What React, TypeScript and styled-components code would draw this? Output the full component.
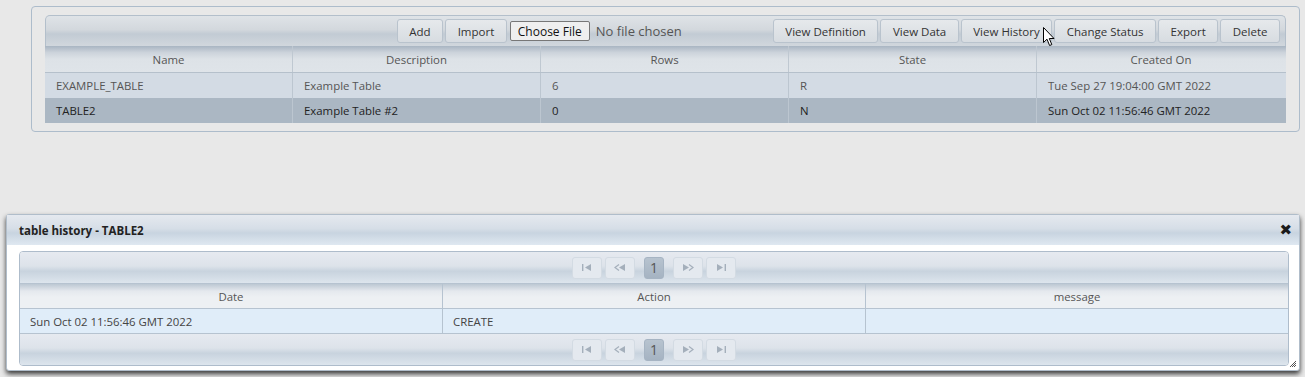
import { FC } from "react";
import styled, { createGlobalStyle } from "styled-components";

const GlobalStyle = createGlobalStyle`
    body {
        margin: 0;
        background: #e8e8e8;
        font-family: "Open Sans", "Noto Sans", sans-serif;
        font-size: 11.4px;
        color: #444;
    }
`;

const tables = [
    { name: "EXAMPLE_TABLE", desc: "Example Table", rows: "6", state: "R", created: "Tue Sep 27 19:04:00 GMT 2022" },
    { name: "TABLE2", desc: "Example Table #2", rows: "0", state: "N", created: "Sun Oct 02 11:56:46 GMT 2022" },
];

const Icon: FC<{ kind: string }> = ({ kind }) => {
    const c = "#a4afbb";
    if (kind === "first")
        return (
            <svg width="10" height="7" viewBox="0 0 10 7">
                <rect x="0" y="0" width="1.4" height="7" fill={c} />
                <polygon points="9,0 9,7 3,3.5" fill={c} />
            </svg>
        );
    if (kind === "prev")
        return (
            <svg width="12" height="7" viewBox="0 0 12 7">
                <polyline points="5,0.5 1,3.5 5,6.5" fill="none" stroke={c} strokeWidth="1.2" />
                <polygon points="11,0 11,7 5,3.5" fill={c} />
            </svg>
        );
    if (kind === "next")
        return (
            <svg width="12" height="7" viewBox="0 0 12 7">
                <polygon points="1,0 1,7 7,3.5" fill={c} />
                <polyline points="7,0.5 11,3.5 7,6.5" fill="none" stroke={c} strokeWidth="1.2" />
            </svg>
        );
    return (
        <svg width="10" height="7" viewBox="0 0 10 7">
            <polygon points="1,0 1,7 7,3.5" fill={c} />
            <rect x="8.6" y="0" width="1.4" height="7" fill={c} />
        </svg>
    );
};

const Pager: FC = () => (
    <PagerBar>
        <PagerBtn>
            <Icon kind="first" />
        </PagerBtn>
        <PagerBtn>
            <Icon kind="prev" />
        </PagerBtn>
        <PageNum>1</PageNum>
        <PagerBtn>
            <Icon kind="next" />
        </PagerBtn>
        <PagerBtn>
            <Icon kind="last" />
        </PagerBtn>
    </PagerBar>
);

export default function App() {
    return (
        <Page>
            <GlobalStyle />
            <Panel>
                <Grid>
                    <Toolbar>
                        <Group>
                            <Button>Add</Button>
                            <Button>Import</Button>
                            <FileButton>Choose File</FileButton>
                            <FileText>No file chosen</FileText>
                        </Group>
                        <Group>
                            <Button>View Definition</Button>
                            <Button>View Data</Button>
                            <Button>View History</Button>
                            <Button>Change Status</Button>
                            <Button>Export</Button>
                            <Button>Delete</Button>
                        </Group>
                    </Toolbar>
                    <HeadRow>
                        <HeadCell>Name</HeadCell>
                        <HeadCell>Description</HeadCell>
                        <HeadCell>Rows</HeadCell>
                        <HeadCell>State</HeadCell>
                        <HeadCell>Created On</HeadCell>
                    </HeadRow>
                    {tables.map((t, i) => (
                        <Row key={t.name} $selected={i === 1}>
                            <Cell>{t.name}</Cell>
                            <Cell>{t.desc}</Cell>
                            <Cell>{t.rows}</Cell>
                            <Cell>{t.state}</Cell>
                            <Cell>{t.created}</Cell>
                        </Row>
                    ))}
                </Grid>
            </Panel>

            <Dialog>
                <TitleBar>
                    <span>table history - TABLE2</span>
                    <Close>✖</Close>
                </TitleBar>
                <DialogBody>
                    <HistGrid>
                        <Pager />
                        <HistHead>
                            <HistHeadCell>Date</HistHeadCell>
                            <HistHeadCell>Action</HistHeadCell>
                            <HistHeadCell>message</HistHeadCell>
                        </HistHead>
                        <HistRow>
                            <HistCell>Sun Oct 02 11:56:46 GMT 2022</HistCell>
                            <HistCell>CREATE</HistCell>
                            <HistCell></HistCell>
                        </HistRow>
                        <Pager />
                    </HistGrid>
                </DialogBody>
                <Grip>
                    <svg width="8" height="8" viewBox="0 0 8 8">
                        <path d="M7 1 L1 7 M7 3 L3 7 M7 5 L5 7" stroke="#555" strokeWidth="1" />
                    </svg>
                </Grip>
            </Dialog>

            <Cursor>
                <svg width="13" height="20" viewBox="0 0 13 20">
                    <path
                        d="M0.5 0.5 L0.5 15.5 L4 12.2 L6.6 18.5 L8.8 17.6 L6.3 11.5 L11 11.5 Z"
                        fill="#fff"
                        stroke="#000"
                        strokeWidth="1"
                        strokeLinejoin="round"
                    />
                </svg>
            </Cursor>
        </Page>
    );
}

const Page = styled.div`
    position: relative;
    width: 1305px;
    height: 377px;
    padding-top: 6px;
    box-sizing: border-box;
    overflow: hidden;
`;

const Panel = styled.div`
    margin-left: 31px;
    width: 1269px;
    height: 126px;
    box-sizing: border-box;
    border: 1px solid #adbccb;
    border-radius: 4px;
    padding: 8px 0 0 13px;
`;

const Grid = styled.div`
    width: 1241px;
`;

const Toolbar = styled.div`
    display: flex;
    justify-content: flex-end;
    align-items: center;
    gap: 91px;
    height: 31px;
    box-sizing: border-box;
    padding: 0 5px 0 0;
    border: 1px solid #b3bfcb;
    border-bottom: none;
    border-radius: 5px 5px 0 0;
    background: linear-gradient(#dfe3e7 0%, #d3d8dd 45%, #c2cbd4 60%, #d1d7dd 100%);
`;

const Group = styled.div`
    display: flex;
    align-items: center;
    gap: 2px;
`;

const Button = styled.div`
    height: 24px;
    box-sizing: border-box;
    display: flex;
    align-items: center;
    padding: 0 11.5px;
    border: 1px solid #b9c3cd;
    border-radius: 3px;
    background: linear-gradient(#e6e9ec, #d7dce1);
    color: #333;
    font-size: 11.5px;
`;

const FileButton = styled.div`
    height: 20px;
    box-sizing: border-box;
    display: flex;
    align-items: center;
    padding: 0 7px;
    margin-left: 1px;
    border: 1px solid #777;
    border-radius: 2px;
    background: #efefef;
    color: #111;
    font-size: 12px;
`;

const FileText = styled.span`
    margin-left: 4px;
    color: #555;
    font-size: 13px;
`;

const HeadRow = styled.div`
    display: grid;
    grid-template-columns: repeat(5, 248px) 1fr;
    height: 26px;
    background: linear-gradient(#a9b5c2 0%, #ccd3db 25%, #dde2e7 50%, #dfe4e9 100%);
    border-bottom: 1px solid #b5c0cb;
`;

const HeadCell = styled.div`
    display: flex;
    align-items: center;
    justify-content: center;
    color: #555;
    border-right: 1px solid #bfc8d1;
    &:last-child {
        border-right: none;
    }
`;

const Row = styled.div<{ $selected: boolean }>`
    display: grid;
    grid-template-columns: repeat(5, 248px) 1fr;
    height: 25px;
    background: ${(p) => (p.$selected ? "#abb7c3" : "#d3dbe4")};
    color: ${(p) => (p.$selected ? "#222" : "#555")};
`;

const Cell = styled.div`
    display: flex;
    align-items: center;
    padding-left: 11px;
    border-right: 1px solid #bcc6d0;
    &:last-child {
        border-right: none;
    }
`;

const Dialog = styled.div`
    position: absolute;
    left: 6px;
    top: 214px;
    width: 1294px;
    height: 157px;
    box-sizing: border-box;
    border: 1px solid #b0bdca;
    border-radius: 3px;
    background: #fff;
    box-shadow: 0 3px 5px rgba(0, 0, 0, 0.75);
`;

const TitleBar = styled.div`
    display: flex;
    align-items: center;
    justify-content: space-between;
    height: 30px;
    padding: 0 7px 0 12px;
    background: linear-gradient(#e5e9ef 0%, #d6dee7 45%, #c8d4e0 60%, #dfe8f1 100%);
    font-weight: bold;
    color: #222;
    font-size: 11.5px;
`;

const Close = styled.span`
    font-family: "DejaVu Sans", sans-serif;
    font-size: 15px;
    color: #1a1a1a;
    margin-top: -1px;
`;

const DialogBody = styled.div`
    padding: 6px 10px 0 12px;
`;

const HistGrid = styled.div`
    border: 1px solid #aebccb;
    border-radius: 4px;
    overflow: hidden;
`;

const PagerBar = styled.div`
    display: flex;
    justify-content: center;
    align-items: center;
    height: 31px;
    background: linear-gradient(#e6eaf0 0%, #dde3ea 45%, #c8d3de 62%, #dde5ed 100%);
    gap: 3px;
`;

const PagerBtn = styled.div`
    width: 30px;
    height: 22px;
    box-sizing: border-box;
    display: flex;
    align-items: center;
    justify-content: center;
    border: 1px solid #d3dbe3;
    border-radius: 3px;
    background: #e4e9ef;
`;

const PageNum = styled.div`
    width: 20px;
    height: 22px;
    margin: 0 6px;
    box-sizing: border-box;
    display: flex;
    align-items: center;
    justify-content: center;
    border-radius: 3px;
    border: 1px solid #a6b4c3;
    background: linear-gradient(#b7c3cf, #a5b3c2);
    color: #555;
    font-size: 14px;
`;

const HistHead = styled.div`
    display: grid;
    grid-template-columns: 423px 423px 1fr;
    height: 24px;
    background: linear-gradient(#bdc8d3 0%, #e5e9ee 30%, #edf0f3 55%);
    border-top: 1px solid #b6c3d0;
    border-bottom: 1px solid #b6c3d0;
`;

const HistHeadCell = styled.div`
    display: flex;
    align-items: center;
    justify-content: center;
    color: #555;
    border-right: 1px solid #b6c3d0;
    &:last-child {
        border-right: none;
    }
`;

const HistRow = styled.div`
    display: grid;
    grid-template-columns: 423px 423px 1fr;
    height: 24px;
    background: #e0edf9;
    border-bottom: 1px solid #b6c3d0;
    color: #444;
`;

const HistCell = styled.div`
    display: flex;
    align-items: center;
    padding-left: 10px;
    border-right: 1px solid #b6c3d0;
    &:last-child {
        border-right: none;
    }
`;

const Grip = styled.div`
    position: absolute;
    right: 2px;
    bottom: 2px;
    width: 8px;
    height: 8px;
    display: flex;
`;

const Cursor = styled.div`
    position: absolute;
    left: 1043px;
    top: 27px;
    width: 13px;
    height: 20px;
`;
